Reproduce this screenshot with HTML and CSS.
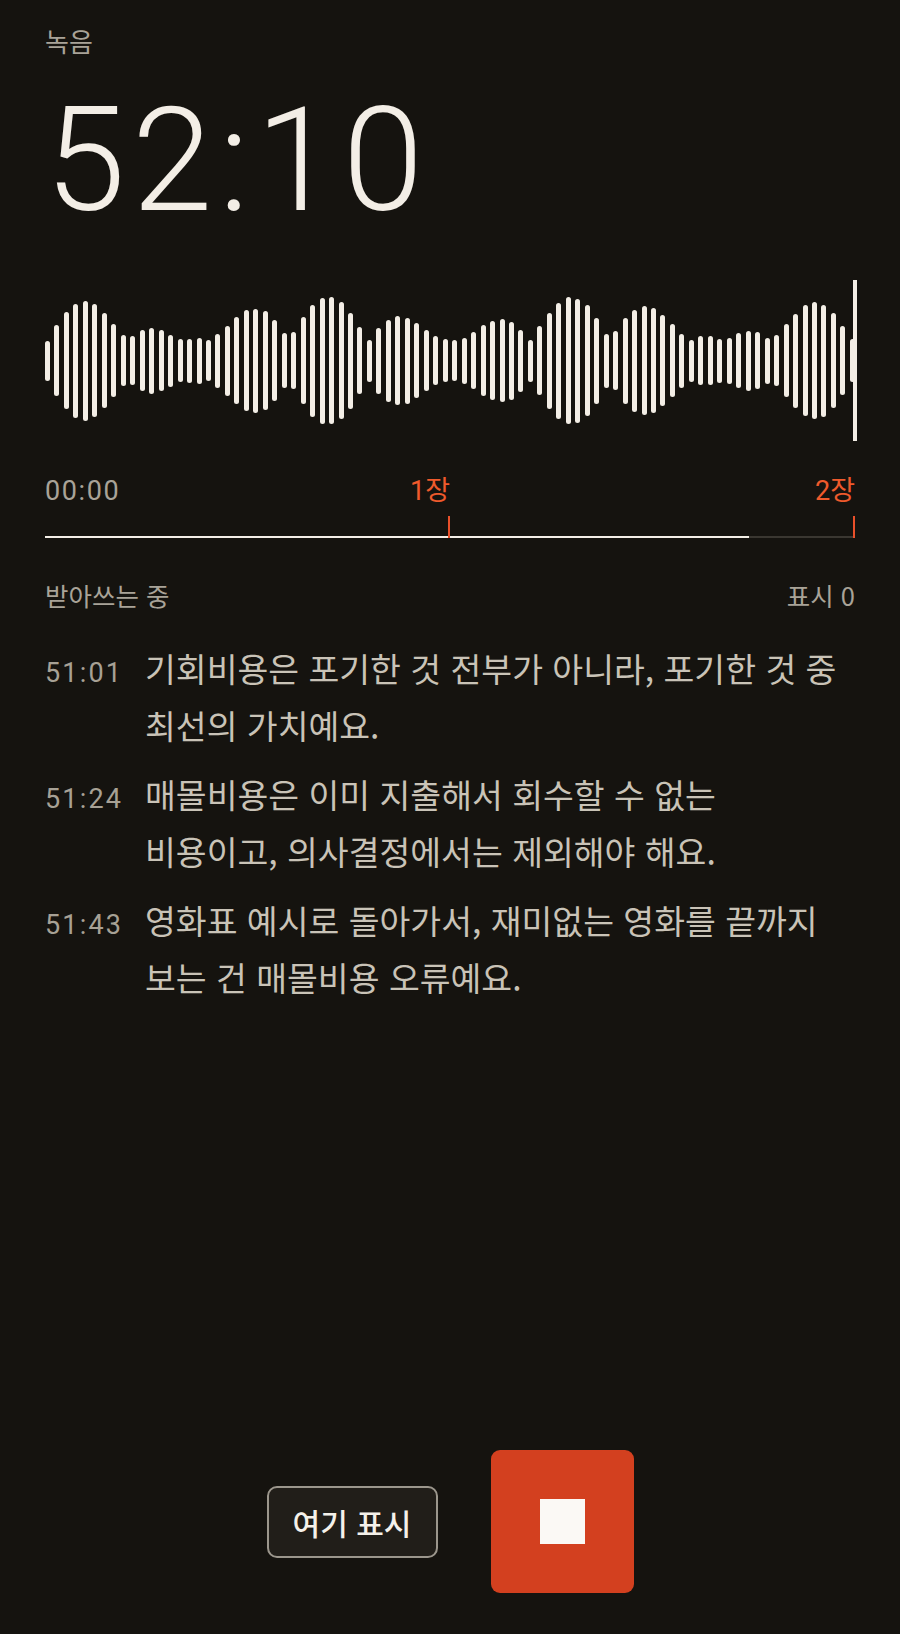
FILE: index.html
```html
<!DOCTYPE html>
<html lang="ko">
<head>
<meta charset="utf-8">
<title>녹음</title>
<link rel="stylesheet" href="styles.css">
</head>
<body>
<main class="screen">
  <header class="head">
    <div class="rec-label">녹음</div>
    <div class="timer">52:10</div>
  </header>

  <div class="wave">
    <span class="bar" style="height:40px"></span><span class="bar" style="height:71px"></span><span class="bar" style="height:97px"></span><span class="bar" style="height:114px"></span><span class="bar" style="height:120px"></span><span class="bar" style="height:113px"></span><span class="bar" style="height:95px"></span><span class="bar" style="height:73px"></span><span class="bar" style="height:51px"></span><span class="bar" style="height:49px"></span>
    <span class="bar" style="height:61px"></span><span class="bar" style="height:66px"></span><span class="bar" style="height:61px"></span><span class="bar" style="height:52px"></span><span class="bar" style="height:43px"></span><span class="bar" style="height:44px"></span><span class="bar" style="height:46px"></span><span class="bar" style="height:41px"></span><span class="bar" style="height:54px"></span><span class="bar" style="height:70px"></span>
    <span class="bar" style="height:87px"></span><span class="bar" style="height:101px"></span><span class="bar" style="height:104px"></span><span class="bar" style="height:99px"></span><span class="bar" style="height:81px"></span><span class="bar" style="height:55px"></span><span class="bar" style="height:57px"></span><span class="bar" style="height:87px"></span><span class="bar" style="height:112px"></span><span class="bar" style="height:126px"></span>
    <span class="bar" style="height:127px"></span><span class="bar" style="height:117px"></span><span class="bar" style="height:96px"></span><span class="bar" style="height:67px"></span><span class="bar" style="height:42px"></span><span class="bar" style="height:66px"></span><span class="bar" style="height:82px"></span><span class="bar" style="height:89px"></span><span class="bar" style="height:86px"></span><span class="bar" style="height:75px"></span>
    <span class="bar" style="height:61px"></span><span class="bar" style="height:49px"></span><span class="bar" style="height:43px"></span><span class="bar" style="height:41px"></span><span class="bar" style="height:46px"></span><span class="bar" style="height:57px"></span><span class="bar" style="height:71px"></span><span class="bar" style="height:79px"></span><span class="bar" style="height:83px"></span><span class="bar" style="height:78px"></span>
    <span class="bar" style="height:62px"></span><span class="bar" style="height:42px"></span><span class="bar" style="height:69px"></span><span class="bar" style="height:96px"></span><span class="bar" style="height:116px"></span><span class="bar" style="height:127px"></span><span class="bar" style="height:124px"></span><span class="bar" style="height:111px"></span><span class="bar" style="height:86px"></span><span class="bar" style="height:54px"></span>
    <span class="bar" style="height:59px"></span><span class="bar" style="height:86px"></span><span class="bar" style="height:102px"></span><span class="bar" style="height:109px"></span><span class="bar" style="height:105px"></span><span class="bar" style="height:91px"></span><span class="bar" style="height:73px"></span><span class="bar" style="height:54px"></span><span class="bar" style="height:42px"></span><span class="bar" style="height:49px"></span>
    <span class="bar" style="height:49px"></span><span class="bar" style="height:44px"></span><span class="bar" style="height:46px"></span><span class="bar" style="height:55px"></span><span class="bar" style="height:60px"></span><span class="bar" style="height:57px"></span><span class="bar" style="height:46px"></span><span class="bar" style="height:51px"></span><span class="bar" style="height:73px"></span><span class="bar" style="height:94px"></span>
    <span class="bar" style="height:111px"></span><span class="bar" style="height:117px"></span><span class="bar" style="height:112px"></span><span class="bar" style="height:95px"></span><span class="bar" style="height:69px"></span><span class="bar" style="height:43px"></span>
    <span class="playhead"></span>
  </div>

  <section class="timeline">
    <div class="tl-labels">
      <span class="tl-start">00:00</span>
      <span class="chapter-label" style="right:50%">1장</span>
      <span class="chapter-label" style="right:0%">2장</span>
    </div>
    <div class="track">
      <div class="track-fill" style="width:86.94%"></div>
      <span class="tick" style="left:50%"></span>
      <span class="tick" style="left:100%"></span>
    </div>
  </section>

  <div class="status">
    <span>받아쓰는 중</span>
    <span>표시 0</span>
  </div>

  <ol class="transcript">
    <li class="line">
      <span class="stamp">51:01</span>
      <p class="text">기회비용은 포기한 것 전부가 아니라, 포기한 것 중 최선의 가치예요.</p>
    </li>
    <li class="line">
      <span class="stamp">51:24</span>
      <p class="text">매몰비용은 이미 지출해서 회수할 수 없는 비용이고, 의사결정에서는 제외해야 해요.</p>
    </li>
    <li class="line">
      <span class="stamp">51:43</span>
      <p class="text">영화표 예시로 돌아가서, 재미없는 영화를 끝까지 보는 건 매몰비용 오류예요.</p>
    </li>
  </ol>

  <footer class="controls">
    <button class="mark-btn" type="button">여기 표시</button>
    <button class="stop-btn" type="button" aria-label="정지"><span class="stop-square"></span></button>
  </footer>
</main>
</body>
</html>
```

FILE: styles.css
```css
html, body {
  margin: 0;
  padding: 0;
  background: #15130f;
}

body {
  font-family: Roboto, "Noto Sans CJK KR", sans-serif;
  color: #f3eee6;
}

.screen {
  box-sizing: border-box;
  min-height: 1634px;
  padding: 0 45px 41px;
  display: flex;
  flex-direction: column;
}

.head {
  display: flex;
  flex-direction: column;
}

.rec-label {
  margin-top: 24px;
  font-family: "Noto Sans CJK KR", sans-serif;
  font-size: 26px;
  line-height: 34px;
  color: #a9a398;
}

.timer {
  margin-top: 30px;
  font-size: 145px;
  line-height: 145px;
  font-weight: 300;
  letter-spacing: 6.5px;
  color: #f3eee6;
}

.wave {
  position: relative;
  margin-top: 47px;
  height: 161px;
  display: flex;
  align-items: center;
  justify-content: space-between;
}

.bar {
  display: block;
  width: 5px;
  border-radius: 3px;
  background: #f3eee6;
}

.playhead {
  position: absolute;
  top: 0;
  bottom: 0;
  right: -2px;
  width: 4px;
  background: #f3eee6;
}

.timeline {
  margin-top: 35px;
}

.tl-labels {
  position: relative;
  height: 30px;
  font-size: 27px;
  line-height: 30px;
}

.tl-start {
  color: #a9a398;
  letter-spacing: 1.6px;
}

.chapter-label {
  position: absolute;
  top: 0;
  color: #ef5a2c;
}

.track {
  position: relative;
  margin-top: 10px;
  height: 22px;
}

.track::before {
  content: "";
  position: absolute;
  left: 0;
  right: 0;
  bottom: 0;
  height: 2px;
  background: #3a3731;
}

.track-fill {
  position: absolute;
  left: 0;
  bottom: 0;
  height: 2px;
  background: #f3eee6;
}

.tick {
  position: absolute;
  top: 0;
  bottom: 0;
  width: 2px;
  margin-left: -2px;
  background: #e9502a;
}

.status {
  margin-top: 40px;
  display: flex;
  justify-content: space-between;
  font-family: "Noto Sans CJK KR", sans-serif;
  font-size: 25.5px;
  line-height: 34px;
  color: #a9a398;
}

.transcript {
  list-style: none;
  margin: 28px 0 0;
  padding: 0;
  display: flex;
  flex-direction: column;
  gap: 13px;
}

.line {
  display: grid;
  grid-template-columns: 100px 1fr;
  align-items: baseline;
}

.stamp {
  font-size: 27px;
  line-height: 56.5px;
  letter-spacing: 2.2px;
  color: #a7a195;
}

.text {
  margin: 0;
  padding-right: 14px;
  font-family: "Noto Sans CJK KR", sans-serif;
  font-size: 33.5px;
  line-height: 56.5px;
  word-break: keep-all;
  color: #c9c3b7;
}

.controls {
  margin-top: auto;
  display: flex;
  justify-content: center;
  align-items: center;
  gap: 53px;
}

.mark-btn {
  box-sizing: border-box;
  width: 171px;
  height: 72px;
  padding: 0;
  border: 2px solid #9b968c;
  border-radius: 10px;
  background: #211e19;
  color: #f5f1ea;
  font-family: "Noto Sans CJK KR", sans-serif;
  font-size: 30px;
  font-weight: 500;
}

.stop-btn {
  box-sizing: border-box;
  width: 143px;
  height: 143px;
  padding: 0;
  border: none;
  border-radius: 9px;
  background: #d3401f;
  display: flex;
  align-items: center;
  justify-content: center;
}

.stop-square {
  display: block;
  width: 45px;
  height: 45px;
  background: #fbf9f5;
}
```
